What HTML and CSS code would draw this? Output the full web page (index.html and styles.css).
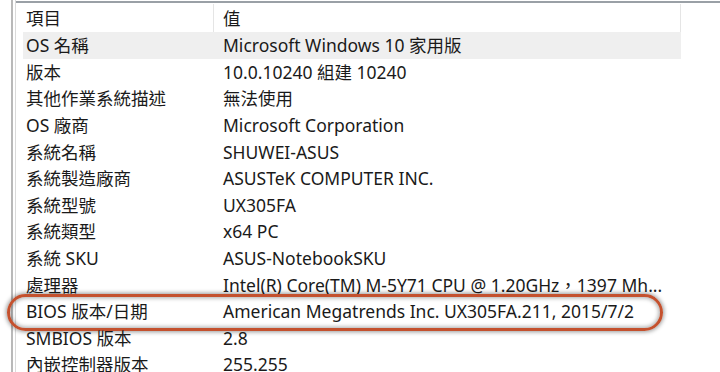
FILE: index.html
```html
<!DOCTYPE html>
<html lang="zh-Hant">
<head>
<meta charset="utf-8">
<link rel="stylesheet" href="styles.css">
</head>
<body>
<div class="outer">
  <div class="panel">
    <div class="table">
      <div class="row head"><div class="c1">項目</div><div class="c2">值</div></div>
      <div class="row sel"><div class="c1">OS 名稱</div><div class="c2">Microsoft Windows 10 家用版</div></div>
      <div class="row"><div class="c1">版本</div><div class="c2">10.0.10240 組建 10240</div></div>
      <div class="row"><div class="c1">其他作業系統描述</div><div class="c2">無法使用</div></div>
      <div class="row"><div class="c1">OS 廠商</div><div class="c2">Microsoft Corporation</div></div>
      <div class="row"><div class="c1">系統名稱</div><div class="c2">SHUWEI-ASUS</div></div>
      <div class="row"><div class="c1">系統製造廠商</div><div class="c2">ASUSTeK COMPUTER INC.</div></div>
      <div class="row"><div class="c1">系統型號</div><div class="c2">UX305FA</div></div>
      <div class="row"><div class="c1">系統類型</div><div class="c2">x64 PC</div></div>
      <div class="row"><div class="c1">系統 SKU</div><div class="c2">ASUS-NotebookSKU</div></div>
      <div class="row"><div class="c1">處理器</div><div class="c2">Intel(R) Core(TM) M-5Y71 CPU @ 1.20GHz，1397 Mh...</div></div>
      <div class="row bios"><div class="c1">BIOS 版本/日期</div><div class="c2">American Megatrends Inc. UX305FA.211, 2015/7/2</div><div class="oval"></div></div>
      <div class="row"><div class="c1">SMBIOS 版本</div><div class="c2">2.8</div></div>
      <div class="row"><div class="c1">內嵌控制器版本</div><div class="c2">255.255</div></div>
    </div>
  </div>
</div>
</body>
</html>
```

FILE: styles.css
```css
html, body {
  margin: 0;
  padding: 0;
  background: #fff;
  overflow: hidden;
}
body {
  width: 720px;
  height: 372px;
  font-family: "Noto Sans", "Noto Sans CJK TC", sans-serif;
  font-size: 17.5px;
  color: #1a1a1a;
}
.outer {
  margin-left: 11px;
  height: 372px;
  border-left: 2px solid #b9b9b9;
}
.panel {
  margin-left: 2px;
  padding-top: 2px;
  height: 370px;
  border-left: 1px solid #dadada;
  padding-left: 7px;
  position: relative;
}
.panel::before {
  content: "";
  position: absolute;
  left: 0;
  right: 0;
  top: 1px;
  height: 2px;
  background: #9aa0a6;
}
.table {
  width: 658px;
  position: relative;
  margin-top: 2px;
}
.row {
  display: grid;
  grid-template-columns: 191px 467px;
  height: 26.6px;
  line-height: 24px;
  align-items: center;
  position: relative;
  white-space: nowrap;
}
.row.head {
  height: 28px;
}
.row.head .c1,
.row.head .c2 {
  border-right: 1px solid #e5e5e5;
  height: 28px;
  line-height: 28px;
}
.row.sel {
  background: #efefef;
}
.c1 {
  padding-left: 3px;
}
.c2 {
  padding-left: 9px;
}
.oval {
  position: absolute;
  left: -16px;
  top: -4px;
  width: 650px;
  height: 31px;
  border: 3px solid #c4512e;
  border-radius: 20px;
  box-shadow: 0 0 4px 1px rgba(0,0,0,0.4), inset 0 0 4px 1px rgba(0,0,0,0.35);
}
```
